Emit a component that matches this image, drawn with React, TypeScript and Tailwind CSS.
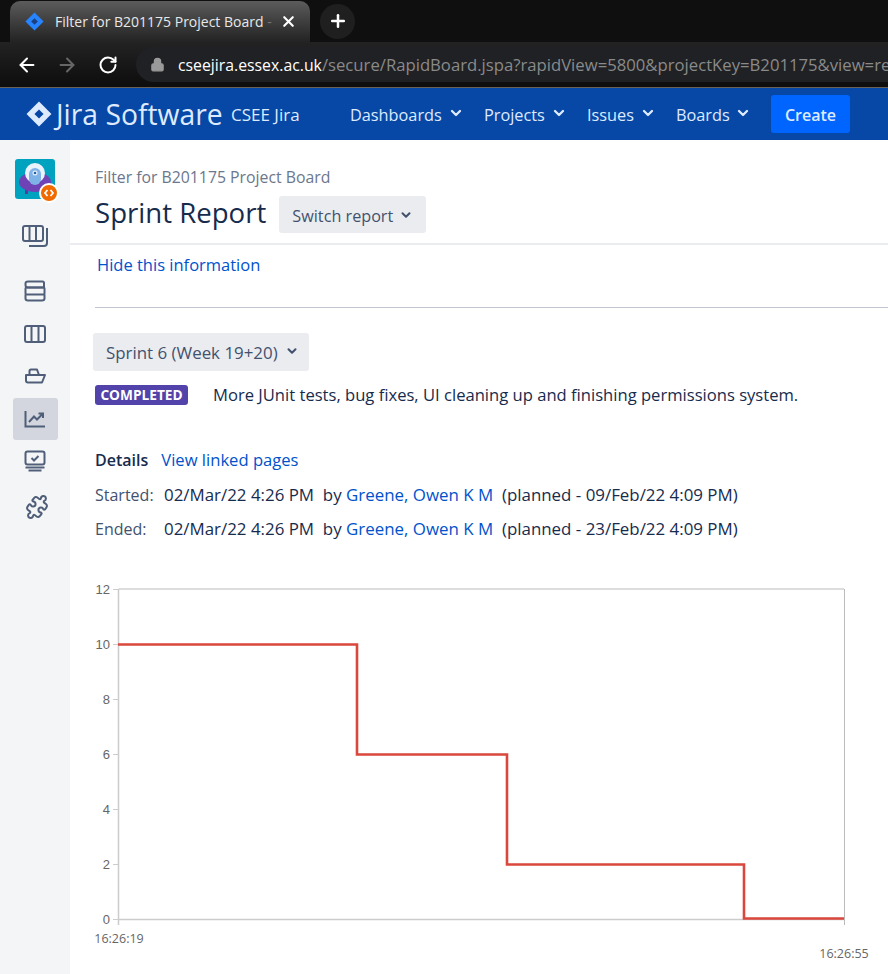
import React from 'react';
import { ArrowLeft, ArrowRight, ChevronDown, Lock, Plus, Puzzle, RotateCw, X } from 'lucide-react';

const sans = '"Open Sans", "Noto Sans", sans-serif';

const JiraMark: React.FC<{ size: number; outer: string; inner: string }> = ({ size, outer, inner }) => (
  <svg width={size} height={size} viewBox="0 0 24 24" className="shrink-0">
    <path d="M12 0.5 L23.5 12 L12 23.5 L0.5 12 Z" fill={outer} />
    <path d="M12 7.8 L16.2 12 L12 16.2 L7.8 12 Z" fill={inner} />
  </svg>
);

const NavItem: React.FC<{ label: string; width: string }> = ({ label, width }) => (
  <div className={`flex items-center justify-between text-[16.3px] text-[#deebff] ${width}`}>
    <span className="pt-[2px]">{label}</span>
    <ChevronDown size={16} strokeWidth={3.5} className="mb-[2px] mr-[1px] text-[#deebff]" />
  </div>
);

const Chrome: React.FC = () => (
  <div className="bg-[#0f0f0f]">
    <div className="flex h-[42px] items-center">
      <div className="ml-[10px] flex h-[41px] w-[300px] items-center rounded-t-[10px] bg-linear-to-b from-[#5c5c5c] to-[#232323] pl-[15px] pr-[13px]">
        <JiraMark size={19} outer="#2684ff" inner="#1a3f7a" />
        <span className="ml-[11px] w-[220px] overflow-hidden whitespace-nowrap text-[14px] text-[#e8e8e8]">Filter for B201175 Project Board <span className="text-[#777]">-</span></span>
        <X size={17} strokeWidth={3} className="ml-auto text-white" />
      </div>
      <div className="ml-[10px] flex h-[35px] w-[35px] items-center justify-center rounded-full bg-[#1f1f1f]">
        <Plus size={20} strokeWidth={3} className="text-white" />
      </div>
    </div>
    <div className="flex h-[46px] items-center border-b border-[#6b6256] bg-linear-to-b from-[#232323] to-[#0d0d0d]">
      <ArrowLeft size={22} strokeWidth={2.2} className="ml-[16px] shrink-0 text-white" />
      <ArrowRight size={22} strokeWidth={2.2} className="ml-[18px] shrink-0 text-[#666]" />
      <RotateCw size={20} strokeWidth={2.4} className="ml-[20px] shrink-0 text-white" />
      <div className="ml-[18px] flex h-[35px] min-w-0 flex-1 items-center rounded-l-full bg-[#202124] pl-[14px]">
        <Lock size={15} fill="#9a9a9a" strokeWidth={2} className="shrink-0 text-[#9a9a9a]" />
        <div className="ml-[13px] min-w-0 overflow-hidden whitespace-nowrap text-[15.8px]">
          <span className="text-white">cseejira.essex.ac.uk</span>
          <span className="text-[16.7px] text-[#8a8a8a]">/secure/RapidBoard.jspa?rapidView=5800&amp;projectKey=B201175&amp;view=re</span>
        </div>
      </div>
    </div>
  </div>
);

const TopNav: React.FC = () => (
  <div className="flex h-[52px] items-center bg-[#0747a6]">
    <div className="ml-[26px] flex items-center">
      <JiraMark size={26} outer="#deebff" inner="#0747a6" />
      <span className="ml-[4px] w-[166px] whitespace-nowrap text-[28.3px] font-normal leading-none text-[#deebff]">Jira Software</span>
    </div>
    <span className="ml-[9px] w-[69px] whitespace-nowrap pt-[1px] text-[17px] text-[#deebff]">CSEE Jira</span>
    <div className="ml-[50px] flex items-center gap-[19px]">
      <NavItem label="Dashboards" width="w-[115px]" />
      <NavItem label="Projects" width="w-[84px]" />
      <NavItem label="Issues" width="w-[70px]" />
      <NavItem label="Boards" width="w-[76px]" />
    </div>
    <div className="ml-[19px] flex h-[38px] w-[79px] items-center justify-center rounded-[3px] bg-[#0065ff] pt-[2px] text-[16px] font-semibold text-[#deebff]">Create</div>
  </div>
);

const SideIcon: React.FC<{ active?: boolean; mt: string; children: React.ReactNode }> = ({ active, mt, children }) => (
  <div className={`flex h-[42px] w-[45px] items-center justify-center rounded-[3px] ${mt} ${active ? 'bg-[#d3d6de]' : ''}`}>{children}</div>
);

const Sidebar: React.FC = () => (
  <div className="flex w-[70px] shrink-0 flex-col items-center bg-[#f4f5f7] pt-[19px]">
    <div className="relative h-[40px] w-[40px] rounded-[3px] bg-[#00a3bf]">
      <svg width="40" height="40" viewBox="0 0 40 40">
        <rect x="10" y="30" width="3" height="5" fill="#5e35a0" />
        <ellipse cx="20" cy="23" rx="16" ry="10" fill="#6f42b5" />
        <circle cx="20" cy="14" r="10" fill="#eaf2fb" />
        <rect x="14" y="9" width="12" height="17" rx="6" fill="#7fb2e6" />
        <circle cx="20" cy="14" r="2.5" fill="#eaf2fb" />
        <circle cx="20" cy="14" r="1.3" fill="#2a5ea6" />
      </svg>
      <div className="absolute bottom-[-4px] right-[-4px] flex h-[20px] w-[20px] items-center justify-center rounded-full border-2 border-white bg-[#f06a00]">
        <svg width="12" height="12" viewBox="0 0 12 12" fill="none" stroke="white" strokeWidth="1.8">
          <path d="M4.5 3 L2 6 L4.5 9 M7.5 3 L10 6 L7.5 9" />
        </svg>
      </div>
    </div>
    <SideIcon mt="mt-[16px]">
      <svg width="26" height="24" viewBox="0 0 26 24" fill="none" stroke="#505f79" strokeWidth="2">
        <rect x="1" y="2" width="20" height="15" rx="2" />
        <path d="M7.5 2 V17 M14 2 V17 M25 4 V19 Q25 22 22 22 H7" />
      </svg>
    </SideIcon>
    <SideIcon mt="mt-[13px]">
      <svg width="22" height="22" viewBox="0 0 22 22" fill="none" stroke="#505f79" strokeWidth="2">
        <path d="M4 7.5 Q1.5 7.5 1.5 5 V3.5 Q1.5 1.5 4 1.5 H18.5 Q20 1.5 20 3 V7.5 Z" />
        <rect x="1.5" y="7.5" width="19" height="7" rx="1" />
        <path d="M1.5 14.5 V18.5 Q1.5 20.5 4 20.5 H18 Q20.5 20.5 20.5 18.5 V14.5" />
      </svg>
    </SideIcon>
    <SideIcon mt="mt-[1px]">
      <svg width="22" height="18" viewBox="0 0 22 18" fill="none" stroke="#505f79" strokeWidth="2">
        <rect x="1" y="1" width="20" height="16" rx="2" />
        <path d="M7.5 1 V17 M14.5 1 V17" />
      </svg>
    </SideIcon>
    <SideIcon mt="mt-[0px]">
      <svg width="22" height="16" viewBox="0 0 22 16" fill="none" stroke="#505f79" strokeWidth="2">
        <path d="M5.5 7 V3 Q5.5 1.5 7 1.5 H13 L15 7" strokeLinejoin="round" />
        <path d="M2 7 H21 L18 14.5 H4 Q2 14.5 2 12.5 Z" strokeLinejoin="round" />
      </svg>
    </SideIcon>
    <SideIcon active mt="mt-[1px]">
      <svg width="22" height="18" viewBox="0 0 22 18" fill="none" stroke="#505f79" strokeWidth="2">
        <path d="M1.5 1 V16.5 H21" />
        <path d="M5 12 L10 6.5 L13 9.5 L18.5 4 M14.5 3.5 H19 V8" />
      </svg>
    </SideIcon>
    <SideIcon mt="mt-[0px]">
      <svg width="22" height="22" viewBox="0 0 22 22" fill="none" stroke="#505f79" strokeWidth="2">
        <rect x="1.5" y="1.5" width="19" height="13" rx="2" />
        <path d="M7.5 8 L10 10.5 L14.5 6" />
        <path d="M1.5 17.5 H20.5 M4.5 20.5 H17.5" />
      </svg>
    </SideIcon>
    <SideIcon mt="mt-[4px]">
      <Puzzle size={24} strokeWidth={2} className="ml-[3px] rotate-[-8deg] text-[#505f79]" />
    </SideIcon>
  </div>
);

// tick positions of the burndown, in svg coordinates
const yTicks = [
  { label: '12', y: 589 },
  { label: '10', y: 644 },
  { label: '8', y: 699 },
  { label: '6', y: 754 },
  { label: '4', y: 809 },
  { label: '2', y: 864 },
  { label: '0', y: 919 },
];

const Chart: React.FC = () => (
  <svg width="818" height="404" viewBox="70 570 818 404" className="block">
    <g fill="#666">
      {yTicks.map((t) => (
        <g key={t.label}>
          <text x="110" y={t.y + 5} textAnchor="end" fontFamily='"Liberation Sans", sans-serif' fontSize="13">{t.label}</text>
          <line x1="113" x2="118" y1={t.y + 0.5} y2={t.y + 0.5} stroke="#ccc" />
        </g>
      ))}
      <text x="119" y="943" textAnchor="middle" fontFamily={sans} fontSize="12.5">16:26:19</text>
      <text x="844" y="958" textAnchor="middle" fontFamily={sans} fontSize="12.5">16:26:55</text>
    </g>
    <line x1="118.5" x2="844" y1="589" y2="589" stroke="#bbb" />
    <line x1="844.5" x2="844.5" y1="589" y2="925" stroke="#bbb" />
    <line x1="118.5" x2="118.5" y1="589" y2="925" stroke="#ccc" strokeWidth="1.5" />
    <line x1="118" x2="844" y1="919.5" y2="919.5" stroke="#ccc" strokeWidth="1.5" />
    <path d="M118 644.5 H357 V754.5 H507 V864.5 H744 V918.5 H844" fill="none" stroke="#d9473d" strokeWidth="2.6" />
  </svg>
);

const Link: React.FC<{ children: React.ReactNode }> = ({ children }) => (
  <span className="text-[#0052cc]">{children}</span>
);

export default function App() {
  return (
    <div className="flex h-[974px] w-[888px] flex-col overflow-hidden bg-white" style={{ fontFamily: sans }}>
      <Chrome />
      <TopNav />
      <div className="flex flex-1">
        <Sidebar />
        <div className="min-w-0 flex-1">
          <div className="h-[105px] border-b-2 border-[#ebecf0] pl-[25px] pt-[25px]">
            <div className="text-[15.8px] leading-[24px] text-[#6b778c]">Filter for B201175 Project Board</div>
            <div className="mt-[7px] flex h-[37px] items-center">
              <span className="pb-[6px] text-[27.6px] leading-[36px] text-[#172b4d]">Sprint Report</span>
              <div className="ml-[13px] flex h-[37px] w-[147px] items-center justify-center gap-[6px] rounded-[3px] bg-[#ebecf0] pt-[3px] text-[16.2px] text-[#42526e]">
                Switch report
                <ChevronDown size={14} strokeWidth={3.5} className="mb-[3px]" />
              </div>
            </div>
          </div>
          <div className="ml-[25px]">
            <div className="ml-[2px] mt-[8px] text-[16.5px] leading-[24px] text-[#0052cc]">Hide this information</div>
            <div className="mt-[30px] h-px bg-[#c1c7d0]" />
            <div className="ml-[-2px] mt-[25px] flex h-[38px] w-[216px] items-center gap-[7px] rounded-[3px] bg-[#ebecf0] pl-[13px] pt-[1px] text-[16.9px] text-[#42526e]">
              Sprint 6 (Week 19+20)
              <ChevronDown size={14} strokeWidth={3.5} className="mb-[3px]" />
            </div>
            <div className="mt-[12px] flex h-[24px] items-center">
              <span className="flex h-[20px] w-[93px] items-center justify-center rounded-[3px] bg-[#5243aa] text-[13.7px] font-bold text-white">COMPLETED</span>
              <span className="ml-[25px] whitespace-nowrap text-[16.6px] text-[#172b4d]">More JUnit tests, bug fixes, UI cleaning up and finishing permissions system.</span>
            </div>
            <div className="mt-[41px] flex h-[24px] items-center text-[16px]">
              <span className="font-semibold text-[#172b4d]">Details</span>
              <span className="ml-[13px] text-[16.6px]"><Link>View linked pages</Link></span>
            </div>
            <div className="mt-[11px] flex h-[24px] items-center whitespace-pre text-[16.9px] text-[#172b4d]">
              <span className="w-[69px] text-[16px] text-[#42526e]">Started:</span>
              <span>02/Mar/22 4:26 PM  by <Link>Greene, Owen K M</Link>  (planned - 09/Feb/22 4:09 PM)</span>
            </div>
            <div className="mt-[10px] flex h-[24px] items-center whitespace-pre text-[16.9px] text-[#172b4d]">
              <span className="w-[69px] text-[16px] text-[#42526e]">Ended:</span>
              <span>02/Mar/22 4:26 PM  by <Link>Greene, Owen K M</Link>  (planned - 23/Feb/22 4:09 PM)</span>
            </div>
          </div>
          <div className="mt-[29px]">
            <Chart />
          </div>
        </div>
      </div>
    </div>
  );
}
